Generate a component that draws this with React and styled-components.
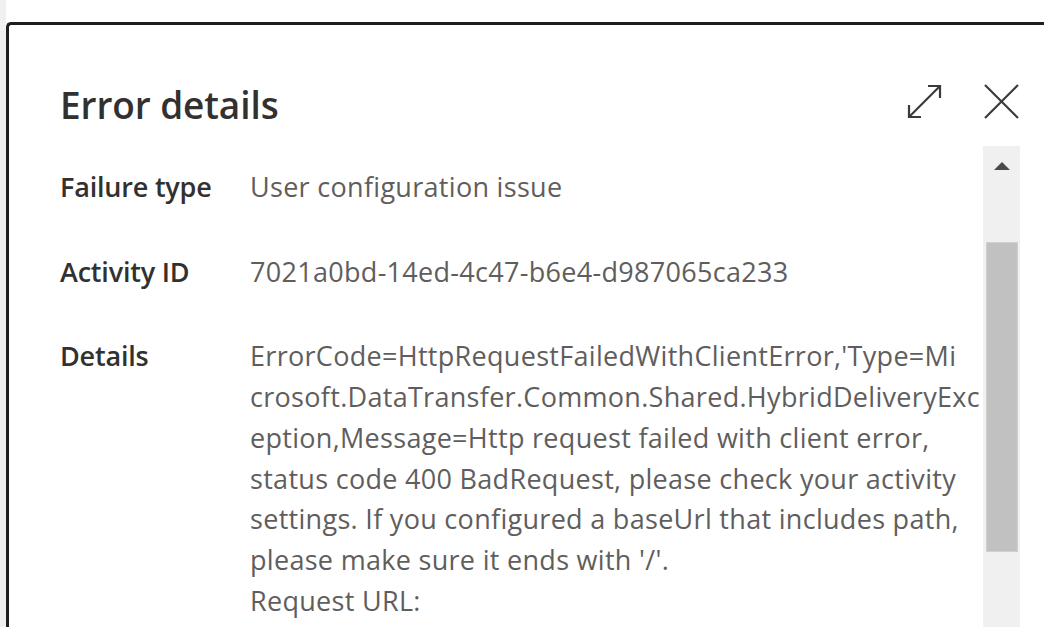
import React from "react";
import styled, { createGlobalStyle } from "styled-components";

const GlobalStyle = createGlobalStyle`
  html, body {
    margin: 0;
    padding: 0;
    background: #ffffff;
  }
  body {
    font-family: "Open Sans", "Noto Sans", "Liberation Sans", sans-serif;
    color: #323130;
  }
`;

const Page = styled.div`
  width: 1044px;
  height: 627px;
  overflow: hidden;
  display: flex;
  padding: 22px 0 0 6px;
  box-sizing: border-box;
  background: linear-gradient(to right, #f0f0f0 0, #f0f0f0 6px, #ffffff 6px);
`;

const Dialog = styled.div`
  flex: 1;
  min-width: 0;
  background: #ffffff;
  border-top: 3px solid #1f1f1f;
  border-left: 3px solid #1f1f1f;
  border-top-left-radius: 5px;
  padding: 50px 24px 0 51px;
  display: flex;
  flex-direction: column;
`;

const Header = styled.div`
  display: flex;
  align-items: center;
  height: 58px;
`;

const Title = styled.h1`
  flex: 1;
  margin: 0;
  font-size: 37px;
  font-weight: 600;
  color: #323130;
  letter-spacing: -0.1px;
`;

const IconButton = styled.button`
  border: 0;
  background: none;
  padding: 0;
  margin-left: ${(p) => p.gap || 0}px;
  margin-bottom: 6px;
  width: 37px;
  height: 37px;
  display: flex;
  align-items: center;
  justify-content: center;
  color: #3b3a39;
  cursor: pointer;
`;

const Body = styled.div`
  flex: 1;
  display: flex;
  gap: 15px;
  margin-top: 13px;
  min-height: 0;
`;

const Content = styled.div`
  flex: 1;
  min-width: 0;
  padding-top: 21px;
`;

const Row = styled.div`
  display: grid;
  grid-template-columns: 190px minmax(0, 1fr);
  margin-bottom: 44px;
  font-size: 27px;
  line-height: 40.7px;
`;

const Label = styled.div`
  font-weight: 600;
  color: #323130;
  letter-spacing: -0.2px;
`;

const Value = styled.div`
  color: #5f5e5d;
  white-space: pre;
  letter-spacing: 0.3px;
`;

const Track = styled.div`
  flex: none;
  width: 37px;
  background: #f0f0f0;
  display: flex;
  flex-direction: column;
  align-items: center;
`;

const Arrow = styled.div`
  width: 0;
  height: 0;
  margin-top: 16px;
  border-left: 8px solid transparent;
  border-right: 8px solid transparent;
  border-bottom: 8px solid #4a4a4a;
`;

const Thumb = styled.div`
  width: 32px;
  height: 310px;
  margin-top: 72px;
  background: #c1c1c1;
  box-sizing: border-box;
  border: 1px solid #d0d0d0;
`;

const ExpandIcon = () => (
  <svg width="37" height="37" viewBox="0 0 37 37" fill="none" stroke="currentColor" strokeWidth="2.2">
    <path d="M3 34 L34 3" />
    <path d="M22 3 H34 V15" />
    <path d="M3 22 V34 H15" />
  </svg>
);

const CloseIcon = () => (
  <svg width="37" height="37" viewBox="0 0 37 37" fill="none" stroke="currentColor" strokeWidth="2.2">
    <path d="M2 2 L35 35" />
    <path d="M35 2 L2 35" />
  </svg>
);

const details =
  "ErrorCode=HttpRequestFailedWithClientError,'Type=Mi\n" +
  "crosoft.DataTransfer.Common.Shared.HybridDeliveryExc\n" +
  "eption,Message=Http request failed with client error,\n" +
  "status code 400 BadRequest, please check your activity\n" +
  "settings. If you configured a baseUrl that includes path,\n" +
  "please make sure it ends with '/'.\n" +
  "Request URL:";

export default function App() {
  return (
    <>
      <GlobalStyle />
      <Page>
        <Dialog>
          <Header>
            <Title>Error details</Title>
            <IconButton aria-label="Expand">
              <ExpandIcon />
            </IconButton>
            <IconButton aria-label="Close" gap={40}>
              <CloseIcon />
            </IconButton>
          </Header>
          <Body>
            <Content>
              <Row>
                <Label>Failure type</Label>
                <Value>User configuration issue</Value>
              </Row>
              <Row>
                <Label>Activity ID</Label>
                <Value>7021a0bd-14ed-4c47-b6e4-d987065ca233</Value>
              </Row>
              <Row>
                <Label>Details</Label>
                <Value>{details}</Value>
              </Row>
            </Content>
            <Track>
              <Arrow />
              <Thumb />
            </Track>
          </Body>
        </Dialog>
      </Page>
    </>
  );
}
